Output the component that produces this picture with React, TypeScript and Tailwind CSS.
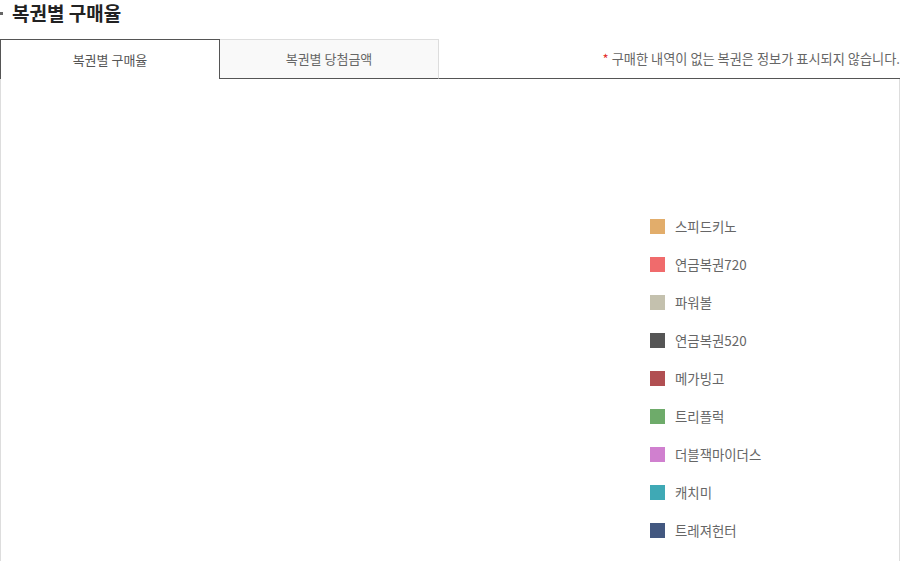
const legend = [
  { name: '스피드키노', color: 'bg-[#e2ad6b]' },
  { name: '연금복권720', color: 'bg-[#f06b6c]' },
  { name: '파워볼', color: 'bg-[#c4c1ae]' },
  { name: '연금복권520', color: 'bg-[#555555]' },
  { name: '메가빙고', color: 'bg-[#b14f52]' },
  { name: '트리플럭', color: 'bg-[#6eab6a]' },
  { name: '더블잭마이더스', color: 'bg-[#d080cf]' },
  { name: '캐치미', color: 'bg-[#3fa9b5]' },
  { name: '트레져헌터', color: 'bg-[#435880]' },
];

export default function App() {
  return (
    <div className="w-[900px] h-[561px] overflow-hidden bg-white font-['Noto_Sans_CJK_KR','Noto_Sans',sans-serif]">
      <h2 className="flex items-center h-[24px] text-[19px] font-bold text-[#222] leading-none">
        <span className="w-[3px] h-[3px] bg-[#666] mr-[9px] mt-[3px]" />
        복권별 구매율
      </h2>
      <div className="flex items-end mt-[15px] h-[40px]">
        <div className="w-[220px] h-[40px] flex items-center justify-center border border-b-0 border-[#555] text-[13px] text-[#555]">
          복권별 구매율
        </div>
        <div className="w-[219px] h-[40px] flex items-center justify-center border-t border-r border-[#ddd] border-b border-b-[#555] bg-[#f9f9f9] text-[13px] text-[#666]">
          복권별 당첨금액
        </div>
        <div className="flex-1 h-[40px] flex items-center justify-end border-b border-[#555] text-[13.2px] text-[#666] whitespace-nowrap">
          <span className="text-[#e4322f] mr-[3px]">*</span>구매한 내역이 없는 복권은 정보가 표시되지 않습니다.
        </div>
      </div>
      <div className="h-[500px] border-x border-[#ddd] flex">
        <div className="flex-1" />
        <ul className="w-[249px] pt-[140px] flex flex-col gap-[23px]">
          {legend.map((l) => (
            <li key={l.name} className="flex items-center h-[15px] text-[13.4px] text-[#666]">
              <span className={`w-[15px] h-[15px] ${l.color} mr-[10px]`} />
              {l.name}
            </li>
          ))}
        </ul>
      </div>
    </div>
  );
}
